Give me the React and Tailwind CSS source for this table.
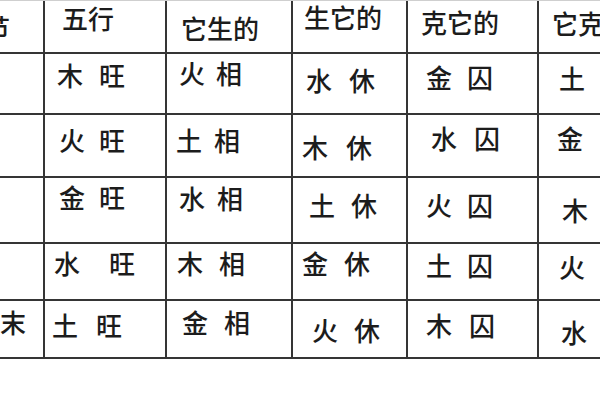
import React from 'react';

// 五行旺相休囚死 table, cropped scan
const rows = [
    [
        { chars: ['节'], cls: 'justify-end pr-[33px] pt-[13px]' },
        { chars: ['五', '行'], cls: 'pl-[17px] pt-[4px]' },
        { chars: ['它', '生', '的'], cls: 'pl-[14px] pt-[14px]' },
        { chars: ['生', '它', '的'], cls: 'pl-[11px] pt-[3px]' },
        { chars: ['克', '它', '的'], cls: 'pl-[13px] pt-[8px]' },
        { chars: ['它', '克'], cls: 'pl-[13px] pt-[9px]' },
    ],
    [
        { chars: [], cls: '' },
        { chars: ['木', '旺'], cls: 'pl-[12px] pt-[8px] gap-[16px]' },
        { chars: ['火', '相'], cls: 'pl-[12px] pt-[6px] gap-[11px]' },
        { chars: ['水', '休'], cls: 'pl-[13px] pt-[13px] gap-[17px]' },
        { chars: ['金', '囚'], cls: 'pl-[18px] pt-[10px] gap-[15px]' },
        { chars: ['土'], cls: 'pl-[20px] pt-[11px]' },
    ],
    [
        { chars: [], cls: '' },
        { chars: ['火', '旺'], cls: 'pl-[14px] pt-[12px] gap-[14px]' },
        { chars: ['土', '相'], cls: 'pl-[9px] pt-[12px] gap-[12px]' },
        { chars: ['木', '休'], cls: 'pl-[9px] pt-[19px] gap-[18px]' },
        { chars: ['水', '囚'], cls: 'pl-[23px] pt-[10px] gap-[17px]' },
        { chars: ['金'], cls: 'pl-[18px] pt-[10px]' },
    ],
    [
        { chars: [], cls: '' },
        { chars: ['金', '旺'], cls: 'pl-[14px] pt-[6px] gap-[14px]' },
        { chars: ['水', '相'], cls: 'pl-[12px] pt-[7px] gap-[12px]' },
        { chars: ['土', '休'], cls: 'pl-[16px] pt-[14px] gap-[16px]' },
        { chars: ['火', '囚'], cls: 'pl-[18px] pt-[14px] gap-[15px]' },
        { chars: ['木'], cls: 'pl-[23px] pt-[19px]' },
    ],
    [
        { chars: [], cls: '' },
        { chars: ['水', '旺'], cls: 'pl-[9px] pt-[6px] gap-[29px]' },
        { chars: ['木', '相'], cls: 'pl-[10px] pt-[6px] gap-[16px]' },
        { chars: ['金', '休'], cls: 'pl-[9px] pt-[6px] gap-[16px]' },
        { chars: ['土', '囚'], cls: 'pl-[18px] pt-[8px] gap-[15px]' },
        { chars: ['火'], cls: 'pl-[20px] pt-[10px]' },
    ],
    [
        { chars: ['末'], cls: 'justify-end pr-[17px] pt-[8px]' },
        { chars: ['土', '旺'], cls: 'pl-[7px] pt-[11px] gap-[18px]' },
        { chars: ['金', '相'], cls: 'pl-[15px] pt-[8px] gap-[16px]' },
        { chars: ['火', '休'], cls: 'pl-[19px] pt-[16px] gap-[16px]' },
        { chars: ['木', '囚'], cls: 'pl-[18px] pt-[11px] gap-[17px]' },
        { chars: ['水'], cls: 'pl-[22px] pt-[18px]' },
    ],
];

const App = () => {
    return (
        <div className="w-[600px] h-[400px] bg-white overflow-hidden font-['Noto_Sans_CJK_SC','Noto_Sans_CJK_JP',sans-serif] font-medium text-[#1c1c1c]">
            <div className="border-t border-[#cfcfcf]">
                <div className="grid grid-cols-[43px_120px_124px_113px_129px_61px] grid-rows-[51px_59px_61px_64px_55px_56px] gap-[2px] pb-[2px] bg-[#353535]">
                    {rows.map((row, r) =>
                        row.map((cell, c) => (
                            <div
                                key={`${r}-${c}`}
                                className={`flex items-start bg-white text-[26px] leading-none whitespace-nowrap ${cell.cls}`}
                            >
                                {cell.chars.map((ch, i) => (
                                    <span key={i} className="shrink-0">{ch}</span>
                                ))}
                            </div>
                        ))
                    )}
                </div>
            </div>
        </div>
    );
};

export default App;
